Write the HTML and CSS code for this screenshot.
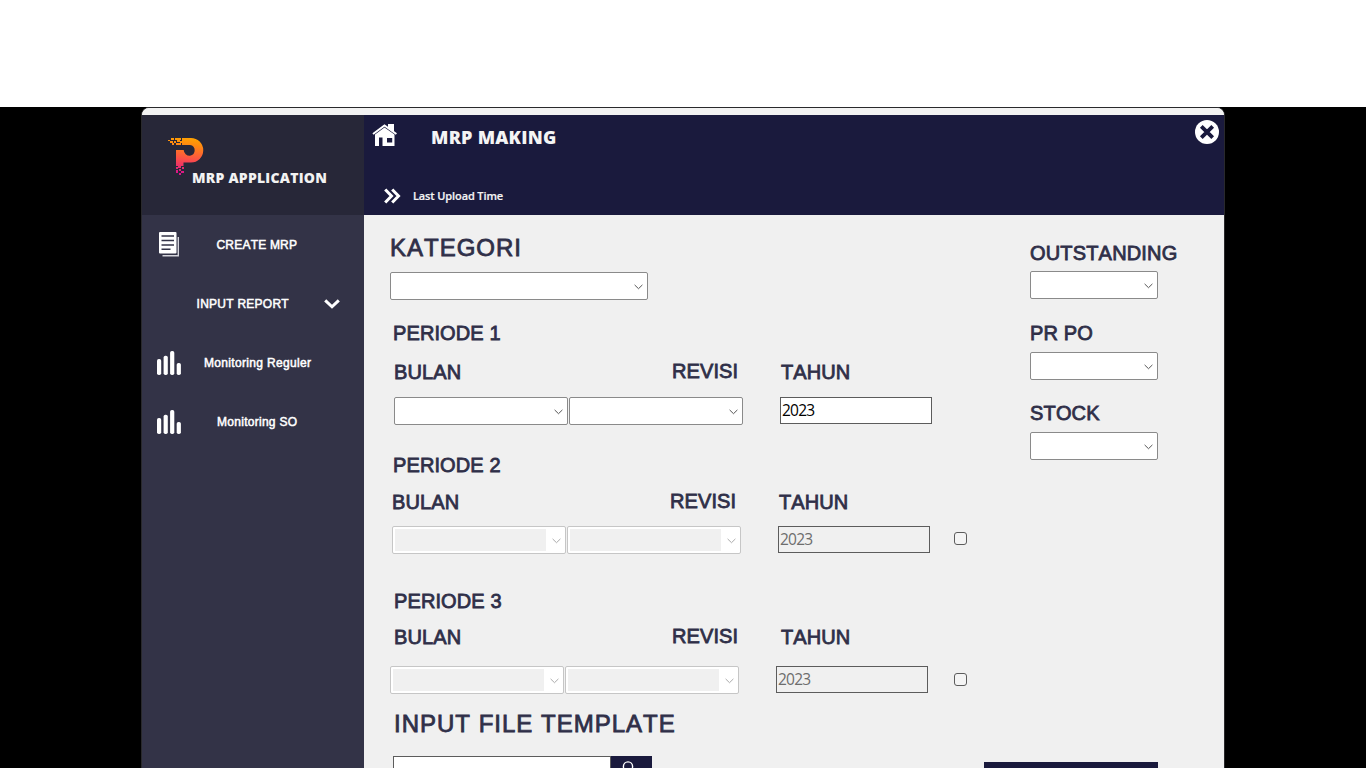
FILE: index.html
```html
<!DOCTYPE html>
<html lang="id">
<head>
<meta charset="utf-8">
<title>MRP Application</title>
<link rel="stylesheet" href="styles.css">
</head>
<body>
<svg width="0" height="0" class="defs">
  <symbol id="chev" viewBox="0 0 9 6"><path d="M.6 .9 4.5 4.7 8.4 .9" fill="none" stroke="currentColor" stroke-width="1"/></symbol>
  <symbol id="bars" viewBox="0 0 24 24"><g fill="#fff"><rect x="0" y="8" width="4.2" height="16" rx="1.8"/><rect x="6.6" y="4.7" width="4.2" height="19.3" rx="1.8"/><rect x="13.1" y="0" width="4.2" height="24" rx="1.8"/><rect x="19.7" y="12" width="4.2" height="12" rx="1.8"/></g></symbol>
</svg>
<div class="stage">
<div class="window">
  <div class="strip"></div>
  <div class="columns">
    <aside class="side">
      <div class="brand">
        <svg class="logo" width="36" height="39" viewBox="0 0 36 39">
          <defs><linearGradient id="g" gradientUnits="userSpaceOnUse" x1="18" y1="0" x2="14" y2="37"><stop offset="0" stop-color="#ffa400"/><stop offset=".2" stop-color="#ff8a10"/><stop offset=".6" stop-color="#fb4e48"/><stop offset="1" stop-color="#d9128c"/></linearGradient></defs>
          <g fill="url(#g)">
            <path d="M14 1H23A12.2 12.2 0 0 1 23 25.5H15.5V29H13V31H10V29H8V13H15.7A6 6 0 0 0 22 18.7A5.4 5.4 0 0 0 22 8H14V6H12V4H14Z"/>
            <path d="M0 3h2v1H0zM3 1h3v2H3zM7 1h6v2H7zM2 4h3v2H2zM6 4h2v2H6zM4 6h2v2H4zM8 6h5v2H8zM9 3h3v2H9zM8 30h2v2H8zM11 32h2v2h-2zM14 30h2v2h-2zM8 33h2v3H8zM13 34h3v2h-3zM11 36h2v2h-2z"/>
          </g>
        </svg>
        <span class="brand-name">MRP APPLICATION</span>
      </div>
      <nav>
        <div class="item"><svg class="doc" width="22" height="25" viewBox="0 0 22 25"><path d="M3.5 23.7H19.3V5" fill="none" stroke="#d5d5dc" stroke-width="1.4"/><rect x="0" y="0" width="17.5" height="21.5" rx="1" fill="#fff"/><path d="M2.5 4h12.5M2.5 8.5h12.5M2.5 13h12.5M2.5 17.3h9" stroke="#333347" stroke-width="1.4"/></svg><span class="t1">CREATE MRP</span></div>
        <div class="item"><span class="t2">INPUT REPORT</span><svg class="down" width="16" height="10" viewBox="0 0 16 10"><path d="M1.2 1.4 8 7.8 14.8 1.4" fill="none" stroke="#fff" stroke-width="3"/></svg></div>
        <div class="item"><svg class="bars" width="24" height="24"><use href="#bars"/></svg><span class="t3">Monitoring Reguler</span></div>
        <div class="item"><svg class="bars" width="24" height="24"><use href="#bars"/></svg><span class="t4">Monitoring SO</span></div>
      </nav>
    </aside>
    <main class="main">
      <header class="head">
        <div class="head-row">
          <svg class="home" width="26" height="23" viewBox="0 0 26 23"><path d="M1 10 12.5 1.4 24.4 10" fill="none" stroke="#fff" stroke-width="2"/><path d="M16 0h6v8l-6-4z" fill="#fff"/><path fill="#fff" fill-rule="evenodd" d="M3 10.6 12.5 3.6 22.5 10.6V22H10.5V13.5H7V22H3ZM15 14V18.6H20.2V14Z"/></svg>
          <h1>MRP MAKING</h1>
          <svg class="close" width="24" height="24" viewBox="0 0 24 24"><circle cx="12" cy="12" r="12" fill="#fff"/><path d="M6.3 6.3 17.7 17.7M17.7 6.3 6.3 17.7" stroke="#1a1a3d" stroke-width="3.8"/></svg>
        </div>
        <div class="upload"><svg width="17" height="16" viewBox="0 0 17 16"><path d="M1.2 1.5 7.5 8 1.2 14.5M8.2 1.5 14.5 8 8.2 14.5" fill="none" stroke="#fff" stroke-width="3"/></svg><span>Last Upload Time</span></div>
      </header>
      <div class="body">
        <form class="form">
          <div class="big kat">KATEGORI</div>
          <div class="select wide"><svg width="9" height="6"><use href="#chev"/></svg></div>
          <section class="period p1">
            <div class="label title">PERIODE 1</div>
            <div class="heads"><span class="label bulan">BULAN</span><span class="label revisi">REVISI</span><span class="label">TAHUN</span></div>
            <div class="fields"><div class="select"><svg width="9" height="6"><use href="#chev"/></svg></div><div class="select"><svg width="9" height="6"><use href="#chev"/></svg></div><div class="year">2023</div></div>
          </section>
          <section class="period p2">
            <div class="label title">PERIODE 2</div>
            <div class="heads"><span class="label bulan">BULAN</span><span class="label revisi">REVISI</span><span class="label">TAHUN</span></div>
            <div class="fields"><div class="select off"><i></i><svg width="9" height="6"><use href="#chev"/></svg></div><div class="select off"><i></i><svg width="9" height="6"><use href="#chev"/></svg></div><div class="year dim">2023</div><div class="check"></div></div>
          </section>
          <section class="period p3">
            <div class="label title">PERIODE 3</div>
            <div class="heads"><span class="label bulan">BULAN</span><span class="label revisi">REVISI</span><span class="label">TAHUN</span></div>
            <div class="fields"><div class="select off"><i></i><svg width="9" height="6"><use href="#chev"/></svg></div><div class="select off"><i></i><svg width="9" height="6"><use href="#chev"/></svg></div><div class="year dim">2023</div><div class="check"></div></div>
          </section>
          <div class="big file-title">INPUT FILE TEMPLATE</div>
          <div class="file"><div class="path"></div><div class="search"><svg width="16" height="18" viewBox="0 0 16 18"><circle cx="8" cy="5.5" r="4.6" fill="none" stroke="#fff" stroke-width="1.4"/><path d="M4.8 9 1 13" stroke="#fff" stroke-width="1.4"/></svg></div></div>
        </form>
        <div class="aside">
          <div class="label">OUTSTANDING</div>
          <div class="select first"><svg width="9" height="6"><use href="#chev"/></svg></div>
          <div class="label">PR PO</div>
          <div class="select"><svg width="9" height="6"><use href="#chev"/></svg></div>
          <div class="label">STOCK</div>
          <div class="select"><svg width="9" height="6"><use href="#chev"/></svg></div>
          <div class="submit"></div>
        </div>
      </div>
    </main>
  </div>
</div>
</div>
</body>
</html>
```
FILE: styles.css
```css
* { box-sizing: border-box; }
body { margin: 0; padding-top: 107px; height: 768px; overflow: hidden; background: #fff; font-family: "Liberation Sans", Arial, sans-serif; }
svg { display: block; flex: none; }
.defs { position: absolute; }
.stage { height: 661px; background: #000; overflow: hidden; }
.window { width: 1084px; height: 700px; margin-left: 141px; border: 1px solid #29292c; border-radius: 8px 8px 0 0; overflow: hidden; background: #f0f0f0; }
.strip { height: 7px; background: #f2f2f2; }
.columns { display: flex; height: 692px; }
.side { width: 222px; background: #333347; color: #fff; }
.brand { height: 100px; background: #272738; padding: 22px 0 0 26px; }
.brand-name { display: block; margin: -7px 0 0 24px; font: 800 14px/18px "Open Sans", sans-serif; white-space: nowrap; letter-spacing: .23px; color: #f2f2f2; }
.item { height: 59px; display: flex; align-items: center; font-size: 12px; -webkit-text-stroke: .5px #fff; white-space: nowrap; font-kerning: none; }
.doc { margin-left: 17px; }
.t1 { margin-left: 35.5px; letter-spacing: .2px; }
.t2 { margin-left: 54.6px; width: 127.4px; letter-spacing: .25px; }
.bars { margin-left: 15px; }
.t3 { margin-left: 23px; letter-spacing: .33px; }
.t4 { margin-left: 36px; letter-spacing: .28px; }
.main { width: 860px; background: #f0f0f0; color: #2f2f48; }
.head { height: 100px; background: #1a1a3d; color: #f4f4f4; }
.head-row { height: 42px; display: flex; align-items: flex-start; padding: 5px 5px 0 8px; }
.home { margin-top: 4px; }
h1 { margin: 5px auto 0 33px; font: 800 18px/24px "Open Sans", sans-serif; letter-spacing: .25px; white-space: nowrap; }
.upload { display: flex; align-items: center; height: 20px; margin: 29px 0 0 20px; font: 600 11px/16px "Open Sans", sans-serif; letter-spacing: -.12px; -webkit-text-stroke: .2px #f4f4f4; gap: 12px; }
.body { display: flex; padding: 19px 0 0 26px; }
.form { width: 594px; flex: none; }
.big { height: 28px; font-size: 24px; line-height: 28px; letter-spacing: 1px; -webkit-text-stroke: .8px #2f2f48; font-kerning: none; white-space: nowrap; }
.label { height: 24px; font-size: 20px; line-height: 24px; letter-spacing: .1px; -webkit-text-stroke: .8px #2f2f48; font-kerning: none; white-space: nowrap; }
.select { width: 174px; height: 28px; border: 1px solid #8a8a8a; border-radius: 2px; background: #fff; display: flex; align-items: center; justify-content: flex-end; padding: 2px 4px 0 0; color: #555; }
.wide { width: 258px; margin-top: 10px; }
.period .title { margin-left: 3px; }
.p1 { margin-top: 21px; }
.p2 { margin-top: 28px; }
.p3 { margin-top: 35px; }
.p3 .title { margin-left: 4px; }
.heads { display: flex; margin: 15px 0 0 4px; }
.p2 .heads { margin: 13px 0 0 2px; }
.p3 .heads { margin-top: 12px; }
.bulan { width: 278px; }
.revisi { width: 109px; margin-top: -1px; }
.fields { display: flex; gap: 1px; margin: 13px 0 0 4px; }
.p2 .fields { margin: 12px 0 0 2px; }
.p3 .fields { margin: 17px 0 0 0; }
.year { width: 152px; height: 27px; margin-left: 36px; border: 1px solid #5c5c5c; background: #fff; color: #000; font: 15.5px/24px "Open Sans", sans-serif; letter-spacing: -.8px; padding-left: 1px; }
.dim { background: #f0f0f0; color: #6d6d6d; }
.off { border-color: #c6c6c6; color: #aaa; padding: 0 4px 0 2px; justify-content: space-between; }
.off i { width: 151px; height: 22px; background: #f0f0f0; }
.off svg { margin-top: 2px; }
.check { width: 13px; height: 13px; margin: 6px 0 0 23px; border: 1px solid #5c5c5c; border-radius: 3px; background: #f4f4f4; }
.p3 .check { margin: 7px 0 0 25px; }
.file-title { margin: 16px 0 0 4px; }
.file { display: flex; margin: 18px 0 0 3px; height: 28px; }
.path { width: 218px; border: 1px solid #5c5c5c; background: #fff; }
.search { width: 41px; background: #1a1a3d; padding: 5px 0 0 9px; }
.aside { padding: 7px 0 0 46px; }
.aside .select { width: 128px; margin: 7px 0 21px; }
.aside .first { margin: 6px 0 22px; }
.aside .label { letter-spacing: .17px; }
.submit { width: 174px; height: 34px; margin: 302px 0 0 -46px; background: #1a1a3d; }
```
